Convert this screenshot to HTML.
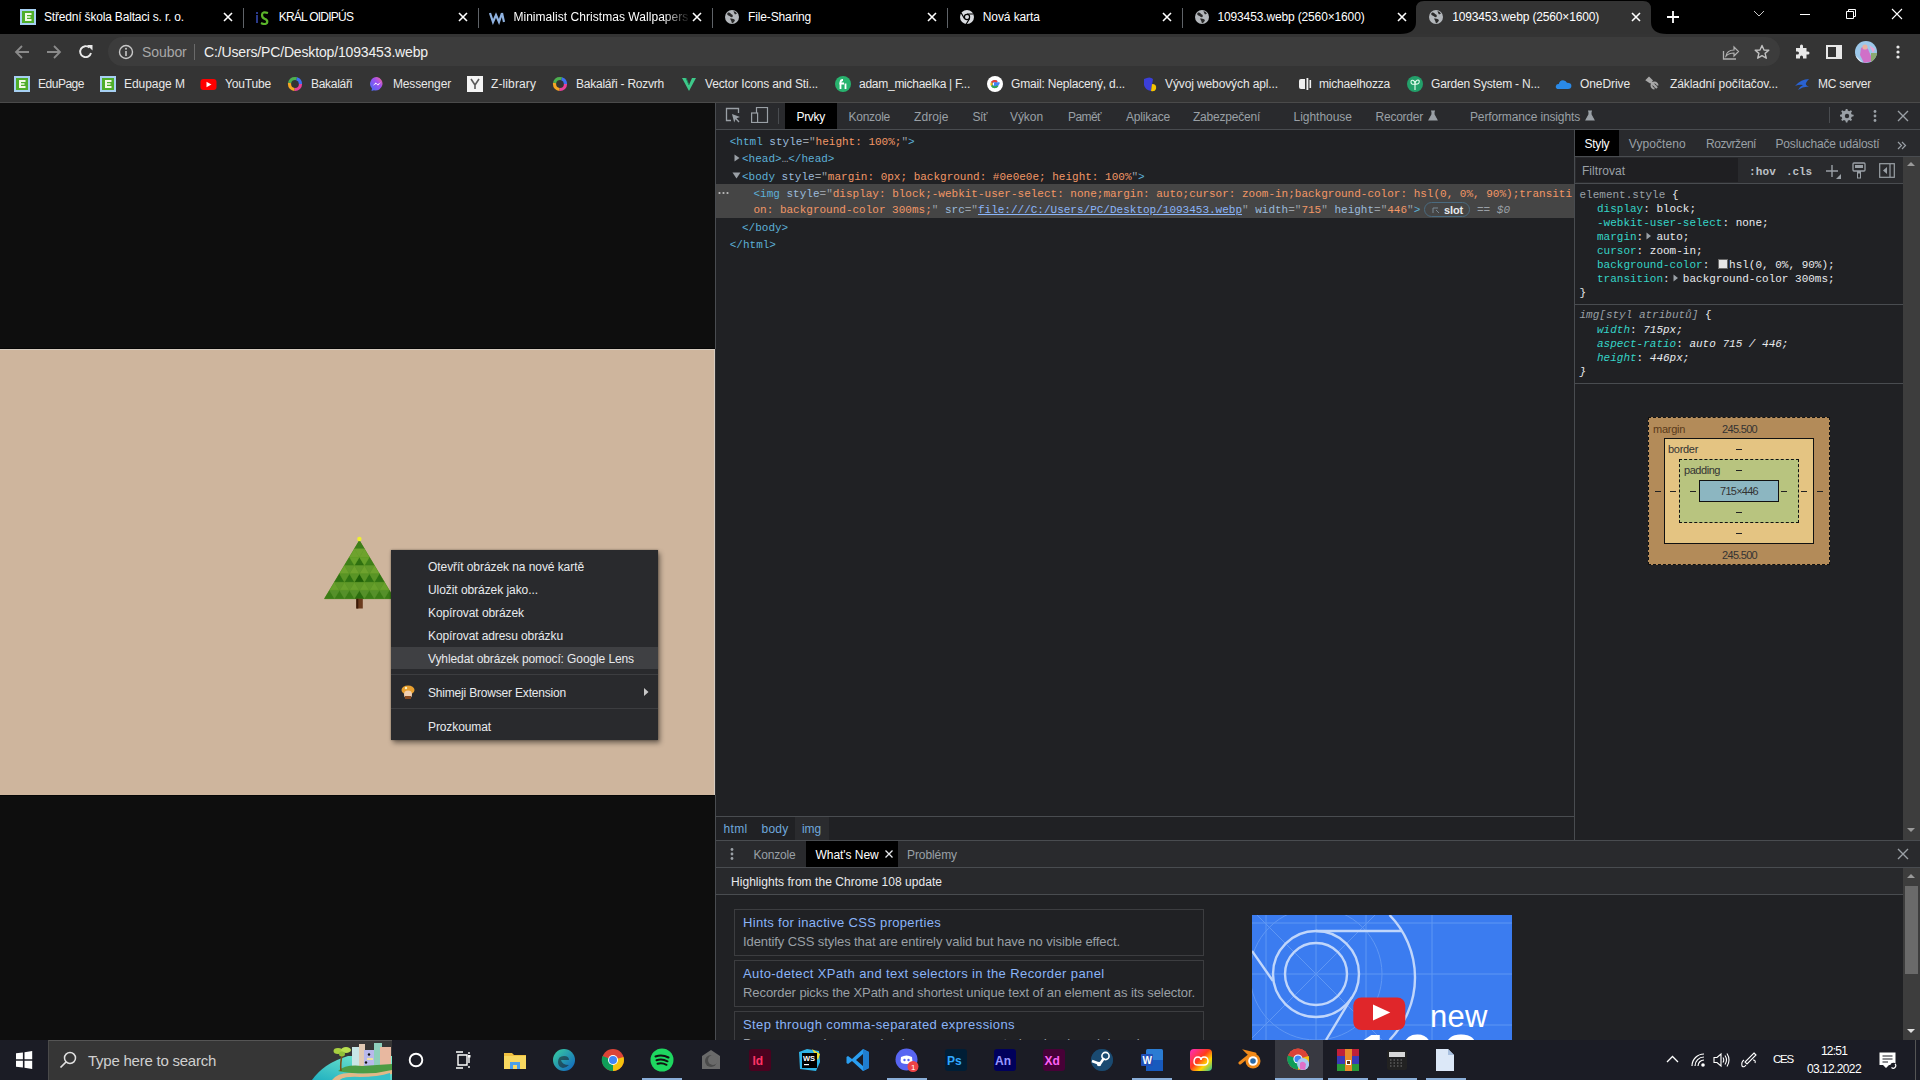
<!DOCTYPE html>
<html><head><meta charset="utf-8"><title>screen</title>
<style>
*{box-sizing:border-box;margin:0;padding:0}
html,body{width:1920px;height:1080px;overflow:hidden;background:#0e0e0e;font-family:"Liberation Sans",sans-serif;font-size:12px;color:#e8eaed}
.a{position:absolute}
svg.a{display:block}
.t{position:absolute;white-space:nowrap}
.m{font-family:"Liberation Mono",monospace;white-space:pre}
</style></head><body>
<div class="a" style="left:0px;top:0px;width:1920px;height:34px;background:#000;"></div>
<svg class="a" style="left:1400px;top:0px;" width="268" height="34" viewBox="0 0 268 34"><path d="M0 34 Q16 34 16 22 L16 9 Q16 1 24 1 L243 1 Q251 1 251 9 L251 22 Q251 34 267 34 Z" fill="#333333"/></svg>
<svg class="a" style="left:20px;top:9px;" width="16" height="16" viewBox="0 0 16 16"><rect width="16" height="16" fill="#a6cff2"/><rect x="2" y="2" width="12" height="12" fill="#4fae2a"/><path d="M5 4 H11.5 V6 H7 V7.2 H10.5 V8.8 H7 V10 H11.5 V12 H5 Z" fill="#f2fae6"/></svg>
<div class="t " style="left:44.0px;top:11px;font-family:'Liberation Sans',sans-serif;font-size:12px;line-height:12px;color:#fff;letter-spacing:-0.180px;">Střední škola Baltaci s. r. o.</div>
<svg class="a" style="left:223px;top:12px;" width="10" height="10" viewBox="0 0 10 10"><path d="M1 1 L9 9 M9 1 L1 9" stroke="#fff" stroke-width="1.6"/></svg>
<div class="a" style="left:243px;top:8px;width:1px;height:20px;background:#5f6368;"></div>
<svg class="a" style="left:255px;top:9px;" width="16" height="16" viewBox="0 0 16 16"><rect x="1" y="3" width="2" height="2" fill="#2a3a8a"/><rect x="1" y="6" width="2" height="8" fill="#2a3a8a"/><path d="M13 4 Q7 2 7 6 Q7 9 10 10 Q13 11 12 14 Q10 16 6 14" stroke="#5bb52a" stroke-width="2.2" fill="none"/></svg>
<div class="t " style="left:278.7px;top:11px;font-family:'Liberation Sans',sans-serif;font-size:12px;line-height:12px;color:#fff;letter-spacing:-0.752px;">KRÁL OIDIPÚS</div>
<svg class="a" style="left:458px;top:12px;" width="10" height="10" viewBox="0 0 10 10"><path d="M1 1 L9 9 M9 1 L1 9" stroke="#fff" stroke-width="1.6"/></svg>
<div class="a" style="left:478px;top:8px;width:1px;height:20px;background:#5f6368;"></div>
<svg class="a" style="left:489px;top:9px;" width="16" height="16" viewBox="0 0 16 16"><path d="M1 4 L4 13 L7 6 L10 13 L13 4 M13 4 L15 13" stroke="#8fb2e0" stroke-width="2.2" fill="none"/></svg>
<div class="a" style="left:513.4px;top:9px;width:180px;height:18px;overflow:hidden;-webkit-mask-image:linear-gradient(90deg,#000 150px,transparent 178px)"><div class="t " style="left:0px;top:2px;font-family:'Liberation Sans',sans-serif;font-size:12px;line-height:12px;color:#fff;letter-spacing:0.045px;">Minimalist Christmas Wallpapers</div></div>
<svg class="a" style="left:692px;top:12px;" width="10" height="10" viewBox="0 0 10 10"><path d="M1 1 L9 9 M9 1 L1 9" stroke="#fff" stroke-width="1.6"/></svg>
<div class="a" style="left:712px;top:8px;width:1px;height:20px;background:#5f6368;"></div>
<svg class="a" style="left:724px;top:9px;" width="16" height="16" viewBox="0 0 16 16"><circle cx="8" cy="8" r="7" fill="#b4b8bc"/><path d="M4 3.5 Q6.5 3 7 5 Q9.5 5.5 8.5 8 Q6.5 8.5 5.5 7 Q3.5 6.5 3 5 Z M9.5 2 Q12 2.5 13 4.5 L11 5.5 Q10 4 9.5 2 Z M6 9.5 Q9.5 9 11 11 Q10.5 13.5 8 14.5 Q7.5 12 6 9.5 Z" fill="#2a2a2a"/></svg>
<div class="t " style="left:748.1px;top:11px;font-family:'Liberation Sans',sans-serif;font-size:12px;line-height:12px;color:#fff;letter-spacing:-0.141px;">File-Sharing</div>
<svg class="a" style="left:927px;top:12px;" width="10" height="10" viewBox="0 0 10 10"><path d="M1 1 L9 9 M9 1 L1 9" stroke="#fff" stroke-width="1.6"/></svg>
<div class="a" style="left:947px;top:8px;width:1px;height:20px;background:#5f6368;"></div>
<svg class="a" style="left:959px;top:9px;" width="16" height="16" viewBox="0 0 16 16"><circle cx="8" cy="8" r="7" fill="#dadce0"/><circle cx="8" cy="8" r="3.2" fill="#000"/><circle cx="8" cy="8" r="2" fill="#dadce0"/><path d="M8 5 L14.5 5 M5.4 9.5 L2.2 4 M10.6 9.5 L7.3 15" stroke="#000" stroke-width="1.2"/></svg>
<div class="t " style="left:982.8px;top:11px;font-family:'Liberation Sans',sans-serif;font-size:12px;line-height:12px;color:#fff;letter-spacing:-0.103px;">Nová karta</div>
<svg class="a" style="left:1162px;top:12px;" width="10" height="10" viewBox="0 0 10 10"><path d="M1 1 L9 9 M9 1 L1 9" stroke="#fff" stroke-width="1.6"/></svg>
<div class="a" style="left:1182px;top:8px;width:1px;height:20px;background:#5f6368;"></div>
<svg class="a" style="left:1194px;top:9px;" width="16" height="16" viewBox="0 0 16 16"><circle cx="8" cy="8" r="7" fill="#b4b8bc"/><path d="M4 3.5 Q6.5 3 7 5 Q9.5 5.5 8.5 8 Q6.5 8.5 5.5 7 Q3.5 6.5 3 5 Z M9.5 2 Q12 2.5 13 4.5 L11 5.5 Q10 4 9.5 2 Z M6 9.5 Q9.5 9 11 11 Q10.5 13.5 8 14.5 Q7.5 12 6 9.5 Z" fill="#2a2a2a"/></svg>
<div class="t " style="left:1217.5px;top:11px;font-family:'Liberation Sans',sans-serif;font-size:12px;line-height:12px;color:#fff;letter-spacing:-0.144px;">1093453.webp (2560×1600)</div>
<svg class="a" style="left:1397px;top:12px;" width="10" height="10" viewBox="0 0 10 10"><path d="M1 1 L9 9 M9 1 L1 9" stroke="#fff" stroke-width="1.6"/></svg>
<svg class="a" style="left:1428px;top:9px;" width="16" height="16" viewBox="0 0 16 16"><circle cx="8" cy="8" r="7" fill="#b4b8bc"/><path d="M4 3.5 Q6.5 3 7 5 Q9.5 5.5 8.5 8 Q6.5 8.5 5.5 7 Q3.5 6.5 3 5 Z M9.5 2 Q12 2.5 13 4.5 L11 5.5 Q10 4 9.5 2 Z M6 9.5 Q9.5 9 11 11 Q10.5 13.5 8 14.5 Q7.5 12 6 9.5 Z" fill="#2a2a2a"/></svg>
<div class="t " style="left:1452.2px;top:11px;font-family:'Liberation Sans',sans-serif;font-size:12px;line-height:12px;color:#fff;letter-spacing:-0.144px;">1093453.webp (2560×1600)</div>
<svg class="a" style="left:1631px;top:12px;" width="10" height="10" viewBox="0 0 10 10"><path d="M1 1 L9 9 M9 1 L1 9" stroke="#fff" stroke-width="1.6"/></svg>
<svg class="a" style="left:1666px;top:10px;" width="14" height="14" viewBox="0 0 14 14"><path d="M7 1 V13 M1 7 H13" stroke="#fff" stroke-width="1.8"/></svg>
<svg class="a" style="left:1753px;top:10px;" width="12" height="8" viewBox="0 0 12 8"><path d="M1 1 L6 6 L11 1" stroke="#c8c8c8" stroke-width="1" fill="none"/></svg>
<div class="a" style="left:1800px;top:14px;width:10px;height:1px;background:#fff;"></div>
<svg class="a" style="left:1845px;top:8px;" width="12" height="12" viewBox="0 0 12 12"><path d="M1.5 3.5 H8.5 V10.5 H1.5 Z M3.5 3.5 V1.5 H10.5 V8.5 H8.5" stroke="#fff" stroke-width="1" fill="none"/></svg>
<svg class="a" style="left:1891px;top:8px;" width="12" height="12" viewBox="0 0 12 12"><path d="M1 1 L11 11 M11 1 L1 11" stroke="#fff" stroke-width="1.1"/></svg>
<div class="a" style="left:0px;top:34px;width:1920px;height:68px;background:#343434;"></div>
<div class="a" style="left:108px;top:37px;width:1672px;height:29px;background:#3c3c3c;border-radius:15px"></div>
<svg class="a" style="left:14px;top:45px;" width="16" height="14" viewBox="0 0 16 14"><path d="M15 7 H2 M8 1 L2 7 L8 13" stroke="#8a8a8a" stroke-width="1.8" fill="none"/></svg>
<svg class="a" style="left:46px;top:45px;" width="16" height="14" viewBox="0 0 16 14"><path d="M1 7 H14 M8 1 L14 7 L8 13" stroke="#8a8a8a" stroke-width="1.8" fill="none"/></svg>
<svg class="a" style="left:78px;top:44px;" width="16" height="16" viewBox="0 0 16 16"><path d="M13 9 A5.5 5.5 0 1 1 11.4 3.6" stroke="#e8e8e8" stroke-width="1.9" fill="none"/><path d="M9 1 L14.5 1 L14.5 6.5 Z" fill="#e8e8e8"/></svg>
<svg class="a" style="left:118px;top:44px;" width="16" height="16" viewBox="0 0 16 16"><circle cx="8" cy="8" r="6.5" stroke="#c8c8c8" stroke-width="1.4" fill="none"/><rect x="7.2" y="7" width="1.6" height="5" fill="#c8c8c8"/><circle cx="8" cy="4.7" r="1" fill="#c8c8c8"/></svg>
<div class="t " style="left:142px;top:45px;font-family:'Liberation Sans',sans-serif;font-size:14px;line-height:14px;color:#a8a8a8;letter-spacing:-0.074px;">Soubor</div>
<div class="a" style="left:194px;top:44px;width:1px;height:16px;background:#6a6a6a;"></div>
<div class="t " style="left:204px;top:45px;font-family:'Liberation Sans',sans-serif;font-size:14px;line-height:14px;color:#f0f0f0;letter-spacing:-0.150px;">C:/Users/PC/Desktop/1093453.webp</div>
<svg class="a" style="left:1722px;top:44px;" width="18" height="16" viewBox="0 0 18 16"><path d="M1.5 7 V15 H14" stroke="#b0b0b0" stroke-width="1.3" fill="none"/><path d="M4 12 Q5 6 12 6 V3 L16.5 7.5 L12 12 V9 Q7 9 4 12 Z" stroke="#b0b0b0" stroke-width="1.2" fill="none"/></svg>
<svg class="a" style="left:1754px;top:44px;" width="16" height="16" viewBox="0 0 16 16"><path d="M8 1.5 L10 6 L14.8 6.3 L11.1 9.4 L12.3 14.2 L8 11.6 L3.7 14.2 L4.9 9.4 L1.2 6.3 L6 6 Z" stroke="#c0c0c0" stroke-width="1.4" fill="none" stroke-linejoin="round"/></svg>
<svg class="a" style="left:1794px;top:44px;" width="16" height="16" viewBox="0 0 16 16"><path d="M6 2 Q6 0.5 7.5 0.5 Q9 0.5 9 2 V4 H12.5 V7.5 H14 Q15.5 7.5 15.5 9 Q15.5 10.5 14 10.5 H12.5 V14.5 H9 V13 Q9 11.5 7.5 11.5 Q6 11.5 6 13 V14.5 H2 V10.5 H3.5 Q5 10.5 5 9 Q5 7.5 3.5 7.5 H2 V4 H6 Z" fill="#e8e8e8"/></svg>
<svg class="a" style="left:1826px;top:45px;" width="16" height="14" viewBox="0 0 16 14"><rect x="1" y="1" width="14" height="12" stroke="#e8e8e8" stroke-width="2" fill="none"/><rect x="10" y="1" width="5" height="12" fill="#e8e8e8"/></svg>
<svg class="a" style="left:1855px;top:41px;" width="22" height="22" viewBox="0 0 22 22"><defs><clipPath id="av"><circle cx="11" cy="11" r="11"/></clipPath></defs><g clip-path="url(#av)"><rect width="22" height="22" fill="#9cc8ea"/><path d="M0 14 L8 22 H0 Z" fill="#e8eef4"/><path d="M6 7 Q10 4 13 8 L18 20 L9 22 L5 14 Z" fill="#d070c8"/><circle cx="10" cy="6" r="2.6" fill="#e8b0a0"/><path d="M14 4 L20 8 L18 12 Z" fill="#e6a8d8"/><rect x="16" y="12" width="6" height="10" fill="#8aaa70"/></g></svg>
<svg class="a" style="left:1895px;top:45px;" width="6" height="14" viewBox="0 0 6 14"><circle cx="3" cy="2" r="1.6" fill="#e8e8e8"/><circle cx="3" cy="7" r="1.6" fill="#e8e8e8"/><circle cx="3" cy="12" r="1.6" fill="#e8e8e8"/></svg>
<svg class="a" style="left:14px;top:76px;" width="16" height="16" viewBox="0 0 16 16"><rect width="16" height="16" fill="#a6cff2"/><rect x="2" y="2" width="12" height="12" fill="#4fae2a"/><path d="M5 4 H11.5 V6 H7 V7.2 H10.5 V8.8 H7 V10 H11.5 V12 H5 Z" fill="#f2fae6"/></svg>
<div class="t " style="left:38px;top:78px;font-family:'Liberation Sans',sans-serif;font-size:12px;line-height:12px;color:#e8e8e8;letter-spacing:-0.482px;">EduPage</div>
<svg class="a" style="left:100px;top:76px;" width="16" height="16" viewBox="0 0 16 16"><rect width="16" height="16" fill="#a6cff2"/><rect x="2" y="2" width="12" height="12" fill="#4fae2a"/><path d="M5 4 H11.5 V6 H7 V7.2 H10.5 V8.8 H7 V10 H11.5 V12 H5 Z" fill="#f2fae6"/></svg>
<div class="t " style="left:124px;top:78px;font-family:'Liberation Sans',sans-serif;font-size:12px;line-height:12px;color:#e8e8e8;letter-spacing:-0.042px;">Edupage M</div>
<svg class="a" style="left:200px;top:76px;" width="17" height="16" viewBox="0 0 17 16"><rect x="0.5" y="3" width="16" height="11" rx="3" fill="#f00"/><path d="M6.5 5.8 L11.5 8.5 L6.5 11.2 Z" fill="#fff"/></svg>
<div class="t " style="left:225px;top:78px;font-family:'Liberation Sans',sans-serif;font-size:12px;line-height:12px;color:#e8e8e8;letter-spacing:-0.165px;">YouTube</div>
<svg class="a" style="left:287px;top:76px;" width="16" height="16" viewBox="0 0 16 16"><circle cx="8" cy="8" r="5.5" stroke="#e9409a" stroke-width="3.2" fill="none" stroke-dasharray="9 30"/><circle cx="8" cy="8" r="5.5" stroke="#f5a623" stroke-width="3.2" fill="none" stroke-dasharray="0 9 9 30"/><circle cx="8" cy="8" r="5.5" stroke="#4caf50" stroke-width="3.2" fill="none" stroke-dasharray="0 18 9 30"/><circle cx="8" cy="8" r="5.5" stroke="#3f6ff0" stroke-width="3.2" fill="none" stroke-dasharray="0 27 8 30"/></svg>
<div class="t " style="left:311px;top:78px;font-family:'Liberation Sans',sans-serif;font-size:12px;line-height:12px;color:#e8e8e8;letter-spacing:-0.294px;">Bakaláři</div>
<svg class="a" style="left:369px;top:76px;" width="16" height="16" viewBox="0 0 16 16"><defs><linearGradient id="mg" x1="0" y1="1" x2="1" y2="0"><stop offset="0" stop-color="#3d6df5"/><stop offset="0.6" stop-color="#a050f0"/><stop offset="1" stop-color="#ff6a8a"/></linearGradient></defs><path d="M8 1 A7 6.8 0 1 1 5 14.3 L2.5 15 L3 12.5 A7 6.8 0 0 1 8 1 Z" fill="url(#mg)"/><path d="M3.8 9.8 L6.8 6.6 L8.6 8.2 L12 6.2 L9 9.4 L7.2 7.8 Z" fill="#fff"/></svg>
<div class="t " style="left:393px;top:78px;font-family:'Liberation Sans',sans-serif;font-size:12px;line-height:12px;color:#e8e8e8;letter-spacing:-0.151px;">Messenger</div>
<svg class="a" style="left:467px;top:76px;" width="16" height="16" viewBox="0 0 16 16"><rect x="0" y="0" width="16" height="16" fill="#f4f4f4"/><path d="M4 3 L8 9 L12 3 M8 9 V13" stroke="#5a5a5a" stroke-width="1.6" fill="none"/></svg>
<div class="t " style="left:491px;top:78px;font-family:'Liberation Sans',sans-serif;font-size:12px;line-height:12px;color:#e8e8e8;letter-spacing:0.111px;">Z-library</div>
<svg class="a" style="left:552px;top:76px;" width="16" height="16" viewBox="0 0 16 16"><circle cx="8" cy="8" r="5.5" stroke="#e9409a" stroke-width="3.2" fill="none" stroke-dasharray="9 30"/><circle cx="8" cy="8" r="5.5" stroke="#f5a623" stroke-width="3.2" fill="none" stroke-dasharray="0 9 9 30"/><circle cx="8" cy="8" r="5.5" stroke="#4caf50" stroke-width="3.2" fill="none" stroke-dasharray="0 18 9 30"/><circle cx="8" cy="8" r="5.5" stroke="#3f6ff0" stroke-width="3.2" fill="none" stroke-dasharray="0 27 8 30"/></svg>
<div class="t " style="left:576px;top:78px;font-family:'Liberation Sans',sans-serif;font-size:12px;line-height:12px;color:#e8e8e8;letter-spacing:-0.237px;">Bakaláři - Rozvrh</div>
<svg class="a" style="left:681px;top:76px;" width="16" height="16" viewBox="0 0 16 16"><path d="M1 2 L8 15 L15 2 L11 2 L8 9 L5 2 Z" fill="#3ec98a"/><path d="M5 2 L8 9" stroke="#1b8a5a" stroke-width="1"/></svg>
<div class="t " style="left:705px;top:78px;font-family:'Liberation Sans',sans-serif;font-size:12px;line-height:12px;color:#e8e8e8;letter-spacing:-0.162px;">Vector Icons and Sti...</div>
<svg class="a" style="left:835px;top:76px;" width="16" height="16" viewBox="0 0 16 16"><circle cx="8" cy="8" r="8" fill="#28b36e"/><path d="M5.5 13 V6.5 Q5.5 4 8 4 M4.3 7.5 H9 M10.5 7.5 V13" stroke="#fff" stroke-width="1.8" fill="none"/></svg>
<div class="t " style="left:859px;top:78px;font-family:'Liberation Sans',sans-serif;font-size:12px;line-height:12px;color:#e8e8e8;letter-spacing:-0.262px;">adam_michaelka | F...</div>
<svg class="a" style="left:987px;top:76px;" width="16" height="16" viewBox="0 0 16 16"><circle cx="8" cy="8" r="8" fill="#fff"/><path d="M12.6 7.2 H8 V9 H10.7 A3 3 0 1 1 10 5.9" stroke="#4285f4" stroke-width="2" fill="none"/><path d="M10 5.9 A3.4 3.4 0 0 0 4.7 6.6" stroke="#ea4335" stroke-width="2" fill="none"/><path d="M4.7 6.6 A3.4 3.4 0 0 0 4.8 9.6" stroke="#fbbc05" stroke-width="2" fill="none"/><path d="M4.8 9.6 A3.4 3.4 0 0 0 10.6 9.8" stroke="#34a853" stroke-width="2" fill="none"/></svg>
<div class="t " style="left:1011px;top:78px;font-family:'Liberation Sans',sans-serif;font-size:12px;line-height:12px;color:#e8e8e8;letter-spacing:-0.184px;">Gmail: Neplacený, d...</div>
<svg class="a" style="left:1142px;top:76px;" width="16" height="16" viewBox="0 0 16 16"><path d="M2 3 Q8 0 11 3 L9 15 Q3 14 2 9 Z" fill="#3b3fd8"/><path d="M10 8 Q15 8 14 13 Q13 16 9 15 Z" fill="#f5c400"/></svg>
<div class="t " style="left:1165px;top:78px;font-family:'Liberation Sans',sans-serif;font-size:12px;line-height:12px;color:#e8e8e8;letter-spacing:-0.114px;">Vývoj webových apl...</div>
<svg class="a" style="left:1297px;top:76px;" width="16" height="16" viewBox="0 0 16 16"><path d="M4 3 H8 V13 H4 Q2 13 2 11 V5 Q2 3 4 3 Z" fill="#f0f0f0"/><rect x="9.5" y="2" width="1.8" height="12" fill="#f0f0f0"/><rect x="12.5" y="4" width="1.6" height="8" fill="#f0f0f0"/></svg>
<div class="t " style="left:1319px;top:78px;font-family:'Liberation Sans',sans-serif;font-size:12px;line-height:12px;color:#e8e8e8;letter-spacing:-0.198px;">michaelhozza</div>
<svg class="a" style="left:1407px;top:76px;" width="16" height="16" viewBox="0 0 16 16"><circle cx="8" cy="8" r="8" fill="#23a06a"/><path d="M8 14 V8 M8 8 Q4 9 4 6 Q4 3.5 6.5 4.5 Q8 5.5 8 8 Q8 5 10 4.2 Q12.5 3.5 12.2 6 Q12 8.5 8 8" stroke="#e8fff0" stroke-width="1.1" fill="none"/></svg>
<div class="t " style="left:1431px;top:78px;font-family:'Liberation Sans',sans-serif;font-size:12px;line-height:12px;color:#e8e8e8;letter-spacing:-0.185px;">Garden System - N...</div>
<svg class="a" style="left:1555px;top:76px;" width="17" height="16" viewBox="0 0 17 16"><path d="M3.5 13 Q0.5 13 0.8 10.2 Q1.2 7.8 3.8 8 Q4.5 4.5 8 4.3 Q10.8 4.3 12 6.8 Q16.5 6.8 16.4 10 Q16.3 13 13 13 Z" fill="#2a8ae8"/></svg>
<div class="t " style="left:1580px;top:78px;font-family:'Liberation Sans',sans-serif;font-size:12px;line-height:12px;color:#e8e8e8;letter-spacing:-0.085px;">OneDrive</div>
<svg class="a" style="left:1645px;top:76px;" width="16" height="16" viewBox="0 0 16 16"><path d="M2 4 L4 2 L6.5 4.5 L5 6 Z M5.5 5.5 L12 12" stroke="#a8a8a8" stroke-width="2.2" fill="#a8a8a8"/><path d="M12.5 9.5 A3 3 0 1 0 9.5 12.5" stroke="#a8a8a8" stroke-width="2" fill="none"/></svg>
<div class="t " style="left:1670px;top:78px;font-family:'Liberation Sans',sans-serif;font-size:12px;line-height:12px;color:#e8e8e8;letter-spacing:-0.087px;">Základní počítačov...</div>
<svg class="a" style="left:1794px;top:76px;" width="16" height="16" viewBox="0 0 16 16"><path d="M15 3 Q7 3 1 10 Q6 8 9 9 Q5 11 4 14 Q10 10 15 11 Q11 9 12 7 Q13 5 15 3 Z" fill="#2a62d0"/></svg>
<div class="t " style="left:1818px;top:78px;font-family:'Liberation Sans',sans-serif;font-size:12px;line-height:12px;color:#e8e8e8;letter-spacing:-0.260px;">MC server</div>
<div class="a" style="left:0px;top:102px;width:1920px;height:1px;background:#4a4a4a;"></div>
<div class="a" style="left:0px;top:103px;width:715px;height:937px;background:#0e0e0e;"></div>
<div class="a" style="left:0px;top:349px;width:715px;height:446px;background:#ceb59d;"></div>
<div class="a" style="left:0px;top:349px;width:715px;height:1px;background:#d6ccc0;"></div>
<div class="a" style="left:714px;top:349px;width:1px;height:446px;background:#d6ccc0;"></div>
<div class="a" style="left:0px;top:348px;width:715px;height:1px;background:#050505;"></div>
<div class="a" style="left:0px;top:795px;width:715px;height:1px;background:#050505;"></div>
<svg class="a" style="left:0;top:0" width="715" height="1040" viewBox="0 0 715 1040"><path d="M359.40 540.00 L394.70 598.80 L324.10 598.80 Z" fill="#4f8a1e"/><path d="M359.40 540.50 L364.39 548.83 L354.41 548.83 Z" fill="#3d7d1a" stroke="#3d7d1a" stroke-width="0.3"/><path d="M354.41 548.83 L359.40 557.16 L349.43 557.16 Z" fill="#6ea22e" stroke="#6ea22e" stroke-width="0.3"/><path d="M364.39 548.83 L369.37 557.16 L359.40 557.16 Z" fill="#6ea22e" stroke="#6ea22e" stroke-width="0.3"/><path d="M354.41 548.83 L364.39 548.83 L359.40 557.16 Z" fill="#6ea22e" stroke="#6ea22e" stroke-width="0.3"/><path d="M349.43 557.16 L354.41 565.49 L344.44 565.49 Z" fill="#3f8019" stroke="#3f8019" stroke-width="0.3"/><path d="M359.40 557.16 L364.39 565.49 L354.41 565.49 Z" fill="#2f7010" stroke="#2f7010" stroke-width="0.3"/><path d="M369.37 557.16 L374.36 565.49 L364.39 565.49 Z" fill="#3f8019" stroke="#3f8019" stroke-width="0.3"/><path d="M349.43 557.16 L359.40 557.16 L354.41 565.49 Z" fill="#66a02a" stroke="#66a02a" stroke-width="0.3"/><path d="M359.40 557.16 L369.37 557.16 L364.39 565.49 Z" fill="#66a02a" stroke="#66a02a" stroke-width="0.3"/><path d="M344.44 565.49 L349.43 573.81 L339.46 573.81 Z" fill="#6ea22e" stroke="#6ea22e" stroke-width="0.3"/><path d="M354.41 565.49 L359.40 573.81 L349.43 573.81 Z" fill="#6ea22e" stroke="#6ea22e" stroke-width="0.3"/><path d="M364.39 565.49 L369.37 573.81 L359.40 573.81 Z" fill="#6ea22e" stroke="#6ea22e" stroke-width="0.3"/><path d="M374.36 565.49 L379.34 573.81 L369.37 573.81 Z" fill="#6ea22e" stroke="#6ea22e" stroke-width="0.3"/><path d="M344.44 565.49 L354.41 565.49 L349.43 573.81 Z" fill="#62982a" stroke="#62982a" stroke-width="0.3"/><path d="M354.41 565.49 L364.39 565.49 L359.40 573.81 Z" fill="#62982a" stroke="#62982a" stroke-width="0.3"/><path d="M364.39 565.49 L374.36 565.49 L369.37 573.81 Z" fill="#62982a" stroke="#62982a" stroke-width="0.3"/><path d="M339.46 573.81 L344.44 582.14 L334.47 582.14 Z" fill="#2f7212" stroke="#2f7212" stroke-width="0.3"/><path d="M349.43 573.81 L354.41 582.14 L344.44 582.14 Z" fill="#2f7212" stroke="#2f7212" stroke-width="0.3"/><path d="M359.40 573.81 L364.39 582.14 L354.41 582.14 Z" fill="#1f6008" stroke="#1f6008" stroke-width="0.3"/><path d="M369.37 573.81 L374.36 582.14 L364.39 582.14 Z" fill="#2f7212" stroke="#2f7212" stroke-width="0.3"/><path d="M379.34 573.81 L384.33 582.14 L374.36 582.14 Z" fill="#2f7212" stroke="#2f7212" stroke-width="0.3"/><path d="M339.46 573.81 L349.43 573.81 L344.44 582.14 Z" fill="#5a9426" stroke="#5a9426" stroke-width="0.3"/><path d="M349.43 573.81 L359.40 573.81 L354.41 582.14 Z" fill="#5a9426" stroke="#5a9426" stroke-width="0.3"/><path d="M359.40 573.81 L369.37 573.81 L364.39 582.14 Z" fill="#5a9426" stroke="#5a9426" stroke-width="0.3"/><path d="M369.37 573.81 L379.34 573.81 L374.36 582.14 Z" fill="#5a9426" stroke="#5a9426" stroke-width="0.3"/><path d="M334.47 582.14 L339.46 590.47 L329.49 590.47 Z" fill="#68a02c" stroke="#68a02c" stroke-width="0.3"/><path d="M344.44 582.14 L349.43 590.47 L339.46 590.47 Z" fill="#68a02c" stroke="#68a02c" stroke-width="0.3"/><path d="M354.41 582.14 L359.40 590.47 L349.43 590.47 Z" fill="#68a02c" stroke="#68a02c" stroke-width="0.3"/><path d="M364.39 582.14 L369.37 590.47 L359.40 590.47 Z" fill="#68a02c" stroke="#68a02c" stroke-width="0.3"/><path d="M374.36 582.14 L379.34 590.47 L369.37 590.47 Z" fill="#68a02c" stroke="#68a02c" stroke-width="0.3"/><path d="M384.33 582.14 L389.31 590.47 L379.34 590.47 Z" fill="#68a02c" stroke="#68a02c" stroke-width="0.3"/><path d="M334.47 582.14 L344.44 582.14 L339.46 590.47 Z" fill="#5f9828" stroke="#5f9828" stroke-width="0.3"/><path d="M344.44 582.14 L354.41 582.14 L349.43 590.47 Z" fill="#5f9828" stroke="#5f9828" stroke-width="0.3"/><path d="M354.41 582.14 L364.39 582.14 L359.40 590.47 Z" fill="#5f9828" stroke="#5f9828" stroke-width="0.3"/><path d="M364.39 582.14 L374.36 582.14 L369.37 590.47 Z" fill="#5f9828" stroke="#5f9828" stroke-width="0.3"/><path d="M374.36 582.14 L384.33 582.14 L379.34 590.47 Z" fill="#5f9828" stroke="#5f9828" stroke-width="0.3"/><path d="M329.49 590.47 L334.47 598.80 L324.50 598.80 Z" fill="#3a7c16" stroke="#3a7c16" stroke-width="0.3"/><path d="M339.46 590.47 L344.44 598.80 L334.47 598.80 Z" fill="#3a7c16" stroke="#3a7c16" stroke-width="0.3"/><path d="M349.43 590.47 L354.41 598.80 L344.44 598.80 Z" fill="#3a7c16" stroke="#3a7c16" stroke-width="0.3"/><path d="M359.40 590.47 L364.39 598.80 L354.41 598.80 Z" fill="#2a6c0e" stroke="#2a6c0e" stroke-width="0.3"/><path d="M369.37 590.47 L374.36 598.80 L364.39 598.80 Z" fill="#3a7c16" stroke="#3a7c16" stroke-width="0.3"/><path d="M379.34 590.47 L384.33 598.80 L374.36 598.80 Z" fill="#3a7c16" stroke="#3a7c16" stroke-width="0.3"/><path d="M389.31 590.47 L394.30 598.80 L384.33 598.80 Z" fill="#3a7c16" stroke="#3a7c16" stroke-width="0.3"/><path d="M329.49 590.47 L339.46 590.47 L334.47 598.80 Z" fill="#55902a" stroke="#55902a" stroke-width="0.3"/><path d="M339.46 590.47 L349.43 590.47 L344.44 598.80 Z" fill="#55902a" stroke="#55902a" stroke-width="0.3"/><path d="M349.43 590.47 L359.40 590.47 L354.41 598.80 Z" fill="#55902a" stroke="#55902a" stroke-width="0.3"/><path d="M359.40 590.47 L369.37 590.47 L364.39 598.80 Z" fill="#55902a" stroke="#55902a" stroke-width="0.3"/><path d="M369.37 590.47 L379.34 590.47 L374.36 598.80 Z" fill="#55902a" stroke="#55902a" stroke-width="0.3"/><path d="M379.34 590.47 L389.31 590.47 L384.33 598.80 Z" fill="#55902a" stroke="#55902a" stroke-width="0.3"/><rect x="356.3" y="598.8" width="6.5" height="9.7" fill="#6b3b1e"/><rect x="356.3" y="598.8" width="2" height="9.7" fill="#3a1a08"/><circle cx="359.4" cy="539" r="2.2" fill="#eef030"/></svg>
<div class="a" style="left:391px;top:550px;width:267px;height:190px;background:#292a2d;box-shadow:2px 3px 5px rgba(0,0,0,0.45),0 0 2px rgba(0,0,0,.35)"></div>
<div class="a" style="left:391px;top:647px;width:267px;height:22px;background:#3f4043;"></div>
<div class="a" style="left:391px;top:674px;width:267px;height:1px;background:#3c3d40;"></div>
<div class="a" style="left:391px;top:708px;width:267px;height:1px;background:#3c3d40;"></div>
<div class="t " style="left:428px;top:561px;font-family:'Liberation Sans',sans-serif;font-size:12px;line-height:12px;color:#e8eaed;letter-spacing:-0.072px;">Otevřít obrázek na nové kartě</div>
<div class="t " style="left:428px;top:584px;font-family:'Liberation Sans',sans-serif;font-size:12px;line-height:12px;color:#e8eaed;letter-spacing:-0.063px;">Uložit obrázek jako...</div>
<div class="t " style="left:428px;top:607px;font-family:'Liberation Sans',sans-serif;font-size:12px;line-height:12px;color:#e8eaed;letter-spacing:-0.082px;">Kopírovat obrázek</div>
<div class="t " style="left:428px;top:630px;font-family:'Liberation Sans',sans-serif;font-size:12px;line-height:12px;color:#e8eaed;letter-spacing:-0.101px;">Kopírovat adresu obrázku</div>
<div class="t " style="left:428px;top:653px;font-family:'Liberation Sans',sans-serif;font-size:12px;line-height:12px;color:#e8eaed;letter-spacing:-0.102px;">Vyhledat obrázek pomocí: Google Lens</div>
<div class="t " style="left:428px;top:687px;font-family:'Liberation Sans',sans-serif;font-size:12px;line-height:12px;color:#e8eaed;letter-spacing:-0.189px;">Shimeji Browser Extension</div>
<div class="t " style="left:428px;top:721px;font-family:'Liberation Sans',sans-serif;font-size:12px;line-height:12px;color:#e8eaed;letter-spacing:-0.103px;">Prozkoumat</div>
<svg class="a" style="left:400px;top:684px;" width="16" height="16" viewBox="0 0 16 16"><ellipse cx="8" cy="6" rx="6.5" ry="4.5" fill="#e8a030"/><circle cx="6" cy="4" r="1.2" fill="#fff3c0"/><ellipse cx="8" cy="10.5" rx="4" ry="4" fill="#f2d0b0"/><rect x="5" y="12" width="6" height="3" fill="#8a4a20"/></svg>
<svg class="a" style="left:643px;top:687px;" width="6" height="10" viewBox="0 0 6 10"><path d="M1 1 L5.5 5 L1 9 Z" fill="#c8c8c8"/></svg>
<div class="a" style="left:715px;top:103px;width:1px;height:937px;background:#494c50;"></div>
<div class="a" style="left:715px;top:349px;width:1px;height:446px;background:#2e2e30;"></div>
<div class="a" style="left:716px;top:103px;width:1204px;height:26px;background:#292a2d;"></div>
<div class="a" style="left:716px;top:129px;width:1204px;height:1px;background:#494c50;"></div>
<div class="a" style="left:716px;top:130px;width:858px;height:687px;background:#202124;"></div>
<svg class="a" style="left:725px;top:107px;" width="16" height="16" viewBox="0 0 16 16"><path d="M6 13.5 H1.5 V1.5 H13.5 V6" stroke="#9aa0a6" stroke-width="1.3" fill="none"/><path d="M7 7 L15 10 L11.5 11.2 L14.5 14.5 L13.5 15.5 L10.5 12.2 L9.2 15.5 Z" fill="#9aa0a6"/></svg>
<svg class="a" style="left:751px;top:107px;" width="18" height="16" viewBox="0 0 18 16"><rect x="5.5" y="0.5" width="11" height="15" stroke="#9aa0a6" stroke-width="1.2" fill="#292a2d"/><rect x="0.6" y="6" width="6" height="9.5" stroke="#9aa0a6" stroke-width="1.2" fill="#292a2d"/></svg>
<div class="a" style="left:778px;top:108px;width:1px;height:16px;background:#494c50;"></div>
<div class="a" style="left:785px;top:103px;width:52px;height:26px;background:#000;"></div>
<div class="t " style="left:796.5px;top:111px;font-family:'Liberation Sans',sans-serif;font-size:12px;line-height:12px;color:#fff;letter-spacing:-0.340px;">Prvky</div>
<div class="t " style="left:848.5px;top:111px;font-family:'Liberation Sans',sans-serif;font-size:12px;line-height:12px;color:#9aa0a6;letter-spacing:-0.266px;">Konzole</div>
<div class="t " style="left:914px;top:111px;font-family:'Liberation Sans',sans-serif;font-size:12px;line-height:12px;color:#9aa0a6;letter-spacing:0.081px;">Zdroje</div>
<div class="t " style="left:972.5px;top:111px;font-family:'Liberation Sans',sans-serif;font-size:12px;line-height:12px;color:#9aa0a6;letter-spacing:-0.446px;">Síť</div>
<div class="t " style="left:1010px;top:111px;font-family:'Liberation Sans',sans-serif;font-size:12px;line-height:12px;color:#9aa0a6;letter-spacing:-0.070px;">Výkon</div>
<div class="t " style="left:1068px;top:111px;font-family:'Liberation Sans',sans-serif;font-size:12px;line-height:12px;color:#9aa0a6;letter-spacing:-0.570px;">Paměť</div>
<div class="t " style="left:1126px;top:111px;font-family:'Liberation Sans',sans-serif;font-size:12px;line-height:12px;color:#9aa0a6;letter-spacing:-0.170px;">Aplikace</div>
<div class="t " style="left:1193px;top:111px;font-family:'Liberation Sans',sans-serif;font-size:12px;line-height:12px;color:#9aa0a6;letter-spacing:-0.216px;">Zabezpečení</div>
<div class="t " style="left:1293.5px;top:111px;font-family:'Liberation Sans',sans-serif;font-size:12px;line-height:12px;color:#9aa0a6;letter-spacing:-0.022px;">Lighthouse</div>
<div class="t " style="left:1375.5px;top:111px;font-family:'Liberation Sans',sans-serif;font-size:12px;line-height:12px;color:#9aa0a6;letter-spacing:-0.232px;">Recorder</div>
<div class="t " style="left:1470px;top:111px;font-family:'Liberation Sans',sans-serif;font-size:12px;line-height:12px;color:#9aa0a6;letter-spacing:-0.136px;">Performance insights</div>
<svg class="a" style="left:1428px;top:110px;" width="10" height="11" viewBox="0 0 10 11"><path d="M3 1 H7 M4 1 V4.5 L1 10 H9 L6 4.5 V1" stroke="#9aa0a6" stroke-width="1.1" fill="#9aa0a6"/></svg>
<svg class="a" style="left:1585px;top:110px;" width="10" height="11" viewBox="0 0 10 11"><path d="M3 1 H7 M4 1 V4.5 L1 10 H9 L6 4.5 V1" stroke="#9aa0a6" stroke-width="1.1" fill="#9aa0a6"/></svg>
<div class="a" style="left:1829px;top:107px;width:1px;height:16px;background:#494c50;"></div>
<svg class="a" style="left:1840px;top:109px;" width="14" height="14" viewBox="0 0 14 14"><path d="M7 0.8 L8.6 0.8 L9 2.8 L10.6 3.6 L12.3 2.5 L13.5 3.7 L12.4 5.4 L13.2 7 L15.2 7.4 V9 L13.2 9.4 L12.4 11 L13.5 12.7 L12.3 13.9 L10.6 12.8 L9 13.6 L8.6 15.6 H7 L6.6 13.6 L5 12.8 L3.3 13.9 L2.1 12.7 L3.2 11 L2.4 9.4 L0.4 9 V7.4 L2.4 7 L3.2 5.4 L2.1 3.7 L3.3 2.5 L5 3.6 L6.6 2.8 Z" transform="translate(-0.8,-1.2) scale(0.95)" fill="#9aa0a6"/><circle cx="7" cy="7" r="2.2" fill="#292a2d"/></svg>
<svg class="a" style="left:1872px;top:109px;" width="6" height="14" viewBox="0 0 6 14"><circle cx="3" cy="2.5" r="1.4" fill="#9aa0a6"/><circle cx="3" cy="7" r="1.4" fill="#9aa0a6"/><circle cx="3" cy="11.5" r="1.4" fill="#9aa0a6"/></svg>
<svg class="a" style="left:1897px;top:110px;" width="12" height="12" viewBox="0 0 12 12"><path d="M1 1 L11 11 M11 1 L1 11" stroke="#9aa0a6" stroke-width="1.4"/></svg>
<div class="a" style="left:716px;top:184px;width:858px;height:34px;background:#454545;"></div>
<div class="t m" style="left:729.75px;top:137px;font-size:11px;line-height:11px;"><span style="color:#5db0d7">&lt;</span><span style="color:#5db0d7">html</span><span style="color:#9bbbdc"> style</span><span style="color:#9aa0a6">=&quot;</span><span style="color:#f29766">height: 100%;</span><span style="color:#9aa0a6">&quot;</span><span style="color:#5db0d7">&gt;</span></div>
<svg class="a" style="left:734px;top:154px;" width="6" height="8" viewBox="0 0 6 8"><path d="M0.5 0.5 L5.5 4 L0.5 7.5 Z" fill="#9aa0a6"/></svg>
<div class="t m" style="left:742px;top:154px;font-size:11px;line-height:11px;"><span style="color:#5db0d7">&lt;</span><span style="color:#5db0d7">head</span><span style="color:#5db0d7">&gt;</span><span style="color:#9aa0a6">…</span><span style="color:#5db0d7">&lt;/</span><span style="color:#5db0d7">head</span><span style="color:#5db0d7">&gt;</span></div>
<svg class="a" style="left:732px;top:172px;" width="9" height="7" viewBox="0 0 9 7"><path d="M0.5 0.5 H8.5 L4.5 6.5 Z" fill="#9aa0a6"/></svg>
<div class="t m" style="left:742px;top:172px;font-size:11px;line-height:11px;"><span style="color:#5db0d7">&lt;</span><span style="color:#5db0d7">body</span><span style="color:#9bbbdc"> style</span><span style="color:#9aa0a6">=&quot;</span><span style="color:#f29766">margin: 0px; background: #0e0e0e; height: 100%</span><span style="color:#9aa0a6">&quot;</span><span style="color:#5db0d7">&gt;</span></div>
<div class="t m" style="left:753.5px;top:189px;font-size:11px;line-height:11px;"><span style="color:#5db0d7">&lt;</span><span style="color:#5db0d7">img</span><span style="color:#9bbbdc"> style</span><span style="color:#9aa0a6">=&quot;</span><span style="color:#f29766">display: block;-webkit-user-select: none;margin: auto;cursor: zoom-in;background-color: hsl(0, 0%, 90%);transiti</span></div>
<div class="t m" style="left:753.5px;top:205px;font-size:11px;line-height:11px;"><span style="color:#f29766">on: background-color 300ms;</span><span style="color:#9aa0a6">&quot;</span><span style="color:#9bbbdc"> src</span><span style="color:#9aa0a6">=&quot;</span><span style="color:#8ab4f8;text-decoration:underline">file:///C:/Users/PC/Desktop/1093453.webp</span><span style="color:#9aa0a6">&quot;</span><span style="color:#9bbbdc"> width</span><span style="color:#9aa0a6">=&quot;</span><span style="color:#f29766">715</span><span style="color:#9aa0a6">&quot;</span><span style="color:#9bbbdc"> height</span><span style="color:#9aa0a6">=&quot;</span><span style="color:#f29766">446</span><span style="color:#9aa0a6">&quot;</span><span style="color:#5db0d7">&gt;</span></div>
<svg class="a" style="left:718px;top:191px;" width="12" height="4" viewBox="0 0 12 4"><circle cx="1.5" cy="2" r="1.1" fill="#bdbdbd"/><circle cx="5.5" cy="2" r="1.1" fill="#bdbdbd"/><circle cx="9.5" cy="2" r="1.1" fill="#bdbdbd"/></svg>
<div class="a" style="left:1424px;top:202px;width:46px;height:15px;background:transparent;border:1px solid #4a6b80;border-radius:8px"></div>
<svg class="a" style="left:1432px;top:206px;" width="8" height="8" viewBox="0 0 8 8"><path d="M1 7 V2 H6" stroke="#7a8a96" stroke-width="1" fill="none"/><path d="M4 4 L7 7" stroke="#7a8a96" stroke-width="1"/></svg>
<div class="t " style="left:1444px;top:205px;font-family:'Liberation Sans',sans-serif;font-size:11px;line-height:11px;color:#e8eaed;letter-spacing:-0.139px;font-weight:bold;">slot</div>
<div class="t m" style="left:1477px;top:205px;font-size:11px;line-height:11px;"><span style="color:#9aa0a6">== </span><span style="color:#9aa0a6;font-style:italic">$0</span></div>
<div class="t m" style="left:742px;top:223px;font-size:11px;line-height:11px;"><span style="color:#5db0d7">&lt;/</span><span style="color:#5db0d7">body</span><span style="color:#5db0d7">&gt;</span></div>
<div class="t m" style="left:729.75px;top:240px;font-size:11px;line-height:11px;"><span style="color:#5db0d7">&lt;/</span><span style="color:#5db0d7">html</span><span style="color:#5db0d7">&gt;</span></div>
<div class="a" style="left:716px;top:816px;width:858px;height:1px;background:#494c50;"></div>
<div class="a" style="left:716px;top:817px;width:858px;height:24px;background:#202124;"></div>
<div class="a" style="left:795px;top:817px;width:34px;height:24px;background:#2a2b2e;"></div>
<div class="t " style="left:723.5px;top:823px;font-family:'Liberation Sans',sans-serif;font-size:12px;line-height:12px;color:#6fa8dc;letter-spacing:0.333px;">html</div>
<div class="t " style="left:761.5px;top:823px;font-family:'Liberation Sans',sans-serif;font-size:12px;line-height:12px;color:#6fa8dc;letter-spacing:0.245px;">body</div>
<div class="t " style="left:802px;top:823px;font-family:'Liberation Sans',sans-serif;font-size:12px;line-height:12px;color:#6fa8dc;letter-spacing:-0.112px;">img</div>
<div class="a" style="left:1574px;top:130px;width:1px;height:711px;background:#494c50;"></div>
<div class="a" style="left:1575px;top:130px;width:345px;height:26px;background:#292a2d;"></div>
<div class="a" style="left:1575px;top:156px;width:345px;height:1px;background:#494c50;"></div>
<div class="a" style="left:1575px;top:130px;width:44px;height:26px;background:#000;"></div>
<div class="t " style="left:1584.4px;top:138px;font-family:'Liberation Sans',sans-serif;font-size:12px;line-height:12px;color:#fff;letter-spacing:-0.201px;">Styly</div>
<div class="t " style="left:1628.8px;top:138px;font-family:'Liberation Sans',sans-serif;font-size:12px;line-height:12px;color:#9aa0a6;letter-spacing:0.082px;">Vypočteno</div>
<div class="t " style="left:1706px;top:138px;font-family:'Liberation Sans',sans-serif;font-size:12px;line-height:12px;color:#9aa0a6;letter-spacing:-0.446px;">Rozvržení</div>
<div class="t " style="left:1775.5px;top:138px;font-family:'Liberation Sans',sans-serif;font-size:12px;line-height:12px;color:#9aa0a6;letter-spacing:-0.179px;">Posluchače událostí</div>
<svg class="a" style="left:1897px;top:141px;" width="10" height="9" viewBox="0 0 10 9"><path d="M1 1 L4.5 4.5 L1 8 M5 1 L8.5 4.5 L5 8" stroke="#9aa0a6" stroke-width="1.2" fill="none"/></svg>
<div class="a" style="left:1575px;top:157px;width:328px;height:26px;background:#292a2d;"></div>
<div class="a" style="left:1576px;top:158px;width:162px;height:24px;background:#1f1f22;"></div>
<div class="t " style="left:1582px;top:165px;font-family:'Liberation Sans',sans-serif;font-size:12px;line-height:12px;color:#9aa0a6;letter-spacing:0.036px;">Filtrovat</div>
<div class="t " style="left:1749px;top:167px;font-family:'Liberation Mono',monospace;font-size:11px;line-height:11px;color:#bdc1c6;letter-spacing:0.149px;font-weight:bold;">:hov</div>
<div class="t " style="left:1786px;top:167px;font-family:'Liberation Mono',monospace;font-size:11px;line-height:11px;color:#bdc1c6;letter-spacing:-0.101px;font-weight:bold;">.cls</div>
<svg class="a" style="left:1824px;top:163px;" width="18" height="16" viewBox="0 0 18 16"><path d="M8 2 V14 M2 8 H14" stroke="#9aa0a6" stroke-width="1.4"/><path d="M17 11 V16 H12 Z" fill="#9aa0a6"/></svg>
<svg class="a" style="left:1851px;top:162px;" width="16" height="17" viewBox="0 0 16 17"><rect x="2" y="1" width="12" height="8" rx="1" stroke="#9aa0a6" stroke-width="1.3" fill="none"/><rect x="4" y="3" width="8" height="3" fill="#9aa0a6"/><rect x="6" y="9" width="4" height="2" fill="#9aa0a6"/><rect x="6.5" y="11" width="3" height="5" stroke="#9aa0a6" stroke-width="1" fill="none"/></svg>
<svg class="a" style="left:1879px;top:163px;" width="16" height="15" viewBox="0 0 16 15"><rect x="0.7" y="0.7" width="14.6" height="13.6" stroke="#9aa0a6" stroke-width="1.2" fill="none"/><path d="M11 1 V14" stroke="#9aa0a6" stroke-width="1.2"/><path d="M8 4 L4 7.5 L8 11 Z" fill="#9aa0a6"/></svg>
<div class="a" style="left:1575px;top:183px;width:328px;height:1px;background:#494c50;"></div>
<div class="a" style="left:1903px;top:157px;width:17px;height:684px;background:#3d3d3d;"></div>
<svg class="a" style="left:1906px;top:160px;" width="10" height="8" viewBox="0 0 10 8"><path d="M1 6 L5 2 L9 6 Z" fill="#9a9a9a"/></svg>
<svg class="a" style="left:1906px;top:826px;" width="10" height="8" viewBox="0 0 10 8"><path d="M1 2 L5 6 L9 2 Z" fill="#9a9a9a"/></svg>
<div class="a" style="left:1575px;top:184px;width:328px;height:657px;background:#202124;"></div>
<div class="t m" style="left:1579.5px;top:190px;font-size:11px;line-height:11px;"><span style="color:#9aa0a6">element.style </span><span style="color:#e8eaed">{</span></div>
<div class="t m" style="left:1597px;top:204px;font-size:11px;line-height:11px;"><span style="color:#35d4c7">display</span><span style="color:#e8eaed">: </span><span style="color:#e8eaed">block;</span></div>
<div class="t m" style="left:1597px;top:218px;font-size:11px;line-height:11px;"><span style="color:#35d4c7">-webkit-user-select</span><span style="color:#e8eaed">: </span><span style="color:#e8eaed">none;</span></div>
<div class="t m" style="left:1597px;top:232px;font-size:11px;line-height:11px;"><span style="color:#35d4c7">margin</span><span style="color:#e8eaed">:</span><span style="color:#e8eaed">  </span><span style="color:#e8eaed">auto;</span></div>
<svg class="a" style="left:1646.2px;top:232px;" width="6" height="8" viewBox="0 0 6 8"><path d="M0.5 0.5 L5 4 L0.5 7.5 Z" fill="#9aa0a6"/></svg>
<div class="t m" style="left:1597px;top:246px;font-size:11px;line-height:11px;"><span style="color:#35d4c7">cursor</span><span style="color:#e8eaed">: </span><span style="color:#e8eaed">zoom-in;</span></div>
<div class="t m" style="left:1597px;top:260px;font-size:11px;line-height:11px;"><span style="color:#35d4c7">background-color</span><span style="color:#e8eaed">: </span><span style="color:#e8eaed">  </span><span style="color:#e8eaed">hsl(0, 0%, 90%);</span></div>
<div class="a" style="left:1717.8px;top:259px;width:10px;height:10px;background:#e6e6e6;border:1px solid #6a6a6a"></div>
<div class="t m" style="left:1597px;top:274px;font-size:11px;line-height:11px;"><span style="color:#35d4c7">transition</span><span style="color:#e8eaed">:</span><span style="color:#e8eaed">  </span><span style="color:#e8eaed">background-color 300ms;</span></div>
<svg class="a" style="left:1672.6px;top:274px;" width="6" height="8" viewBox="0 0 6 8"><path d="M0.5 0.5 L5 4 L0.5 7.5 Z" fill="#9aa0a6"/></svg>
<div class="t m" style="left:1579.5px;top:288px;font-size:11px;line-height:11px;"><span style="color:#e8eaed">}</span></div>
<div class="a" style="left:1575px;top:304px;width:328px;height:1px;background:#494c50;"></div>
<div class="t m" style="left:1579.5px;top:310px;font-size:11px;line-height:11px;"><span style="color:#9aa0a6;font-style:italic">img[styl atributů] </span><span style="color:#e8eaed">{</span></div>
<div class="t m" style="left:1597px;top:325px;font-size:11px;line-height:11px;"><span style="color:#35d4c7;font-style:italic">width</span><span style="color:#e8eaed">: </span><span style="color:#e8eaed;font-style:italic">715px;</span></div>
<div class="t m" style="left:1597px;top:339px;font-size:11px;line-height:11px;"><span style="color:#35d4c7;font-style:italic">aspect-ratio</span><span style="color:#e8eaed">: </span><span style="color:#e8eaed;font-style:italic">auto 715 / 446;</span></div>
<div class="t m" style="left:1597px;top:353px;font-size:11px;line-height:11px;"><span style="color:#35d4c7;font-style:italic">height</span><span style="color:#e8eaed">: </span><span style="color:#e8eaed;font-style:italic">446px;</span></div>
<div class="t m" style="left:1579.5px;top:367px;font-size:11px;line-height:11px;"><span style="color:#e8eaed;font-style:italic">}</span></div>
<div class="a" style="left:1575px;top:383px;width:328px;height:1px;background:#494c50;"></div>
<div class="a" style="left:1648px;top:417px;width:182px;height:148px;background:#b38b59;border:1px dashed #111"></div>
<div class="a" style="left:1664px;top:438px;width:150px;height:106px;background:#e4c482;border:1px solid #111"></div>
<div class="a" style="left:1679px;top:459px;width:120px;height:64px;background:#b8c47f;border:1px dashed #111"></div>
<div class="a" style="left:1699px;top:480px;width:80px;height:22px;background:#8cb6c1;border:1px solid #111"></div>
<div class="t " style="left:1653px;top:424px;font-family:'Liberation Sans',sans-serif;font-size:11px;line-height:11px;color:#5a3a1a;letter-spacing:-0.271px;">margin</div>
<div class="t " style="left:1722px;top:424px;font-family:'Liberation Sans',sans-serif;font-size:11px;line-height:11px;color:#333;letter-spacing:-0.680px;">245.500</div>
<div class="t " style="left:1722px;top:550px;font-family:'Liberation Sans',sans-serif;font-size:11px;line-height:11px;color:#333;letter-spacing:-0.680px;">245.500</div>
<div class="t " style="left:1668px;top:444px;font-family:'Liberation Sans',sans-serif;font-size:11px;line-height:11px;color:#333;letter-spacing:-0.299px;">border</div>
<div class="t " style="left:1684px;top:465px;font-family:'Liberation Sans',sans-serif;font-size:11px;line-height:11px;color:#333;letter-spacing:-0.450px;">padding</div>
<div class="t " style="left:1720px;top:486px;font-family:'Liberation Sans',sans-serif;font-size:11px;line-height:11px;color:#333;letter-spacing:-0.733px;">715×446</div>
<div class="a" style="left:1736px;top:449px;width:6px;height:1px;background:#222;"></div>
<div class="a" style="left:1736px;top:470px;width:6px;height:1px;background:#222;"></div>
<div class="a" style="left:1736px;top:512px;width:6px;height:1px;background:#222;"></div>
<div class="a" style="left:1736px;top:533px;width:6px;height:1px;background:#222;"></div>
<div class="a" style="left:1655px;top:491px;width:6px;height:1px;background:#222;"></div>
<div class="a" style="left:1670px;top:491px;width:6px;height:1px;background:#222;"></div>
<div class="a" style="left:1690px;top:491px;width:6px;height:1px;background:#222;"></div>
<div class="a" style="left:1781px;top:491px;width:6px;height:1px;background:#222;"></div>
<div class="a" style="left:1801px;top:491px;width:6px;height:1px;background:#222;"></div>
<div class="a" style="left:1817px;top:491px;width:6px;height:1px;background:#222;"></div>
<div class="a" style="left:716px;top:840px;width:1204px;height:1px;background:#494c50;"></div>
<div class="a" style="left:716px;top:841px;width:1204px;height:26px;background:#292a2d;"></div>
<svg class="a" style="left:729px;top:847px;" width="6" height="14" viewBox="0 0 6 14"><circle cx="3" cy="2.5" r="1.4" fill="#9aa0a6"/><circle cx="3" cy="7" r="1.4" fill="#9aa0a6"/><circle cx="3" cy="11.5" r="1.4" fill="#9aa0a6"/></svg>
<div class="t " style="left:753.5px;top:849px;font-family:'Liberation Sans',sans-serif;font-size:12px;line-height:12px;color:#9aa0a6;letter-spacing:-0.195px;">Konzole</div>
<div class="a" style="left:806px;top:841px;width:92px;height:26px;background:#000;"></div>
<div class="t " style="left:815.6px;top:849px;font-family:'Liberation Sans',sans-serif;font-size:12px;line-height:12px;color:#fff;letter-spacing:-0.064px;">What's New</div>
<svg class="a" style="left:884px;top:849px;" width="10" height="10" viewBox="0 0 10 10"><path d="M1.5 1.5 L8.5 8.5 M8.5 1.5 L1.5 8.5" stroke="#e8eaed" stroke-width="1.3"/></svg>
<div class="t " style="left:907px;top:849px;font-family:'Liberation Sans',sans-serif;font-size:12px;line-height:12px;color:#9aa0a6;letter-spacing:-0.085px;">Problémy</div>
<svg class="a" style="left:1897px;top:848px;" width="12" height="12" viewBox="0 0 12 12"><path d="M1 1 L11 11 M11 1 L1 11" stroke="#9aa0a6" stroke-width="1.4"/></svg>
<div class="a" style="left:716px;top:867px;width:1204px;height:1px;background:#494c50;"></div>
<div class="a" style="left:716px;top:868px;width:1187px;height:26px;background:#28292c;"></div>
<div class="t " style="left:731px;top:876px;font-family:'Liberation Sans',sans-serif;font-size:12px;line-height:12px;color:#e8eaed;letter-spacing:0.042px;">Highlights from the Chrome 108 update</div>
<div class="a" style="left:716px;top:894px;width:1187px;height:1px;background:#494c50;"></div>
<div class="a" style="left:716px;top:895px;width:1187px;height:145px;background:#202124;"></div>
<div class="a" style="left:734px;top:909px;width:470px;height:47px;background:transparent;border:1px solid #3c3d40"></div>
<div class="t " style="left:743px;top:916px;font-family:'Liberation Sans',sans-serif;font-size:13px;line-height:13px;color:#8ab4f8;letter-spacing:0.307px;">Hints for inactive CSS properties</div>
<div class="t " style="left:743px;top:935px;font-family:'Liberation Sans',sans-serif;font-size:13px;line-height:13px;color:#9aa0a6;letter-spacing:-0.081px;">Identify CSS styles that are entirely valid but have no visible effect.</div>
<div class="a" style="left:734px;top:960px;width:470px;height:47px;background:transparent;border:1px solid #3c3d40"></div>
<div class="t " style="left:743px;top:967px;font-family:'Liberation Sans',sans-serif;font-size:13px;line-height:13px;color:#8ab4f8;letter-spacing:0.391px;">Auto-detect XPath and text selectors in the Recorder panel</div>
<div class="t " style="left:743px;top:986px;font-family:'Liberation Sans',sans-serif;font-size:13px;line-height:13px;color:#9aa0a6;letter-spacing:-0.077px;">Recorder picks the XPath and shortest unique text of an element as its selector.</div>
<div class="a" style="left:734px;top:1011px;width:470px;height:47px;background:transparent;border:1px solid #3c3d40"></div>
<div class="t " style="left:743px;top:1018px;font-family:'Liberation Sans',sans-serif;font-size:13px;line-height:13px;color:#8ab4f8;letter-spacing:0.405px;">Step through comma-separated expressions</div>
<div class="t " style="left:743px;top:1037px;font-family:'Liberation Sans',sans-serif;font-size:13px;line-height:13px;color:#9aa0a6;letter-spacing:0.082px;">Pause on each expression in comma-separated code when debugging.</div>
<svg class="a" style="left:1252px;top:915px" width="260" height="125" viewBox="0 0 260 125"><rect width="260" height="125" fill="#3b7cf0"/><g stroke="#5f97f4" stroke-width="1" fill="none"><path d="M0 8 H260 M0 59 H260 M0 110 H260 M14 0 V125 M64 0 V125 M114 0 V125 M180 0 V125 M0 -5 L130 125 M128 -5 L0 123"/><circle cx="64" cy="59" r="66"/></g><g stroke="#c0d6fb" stroke-width="2.4" fill="none"><circle cx="64" cy="59" r="43"/><circle cx="64" cy="59" r="31"/><path d="M64 16 H150 M137.5 0 A89.3 89.3 0 0 1 137.5 125 M100 82 L74 125 M0 36 L21 66"/></g><rect x="101.3" y="82.4" width="52" height="32.6" rx="8" fill="#e0262a"/><path d="M121 89.5 L138.3 97.5 L121 105.5 Z" fill="#fff"/><text x="178" y="112" font-family="Liberation Sans" font-size="31" fill="#fff" letter-spacing="0.3">new</text><text x="104" y="165" font-family="Liberation Sans" font-weight="bold" font-size="64" fill="#fff" letter-spacing="8">108</text></svg>
<div class="a" style="left:1903px;top:868px;width:17px;height:172px;background:#3d3d3d;"></div>
<div class="a" style="left:1905px;top:886px;width:13px;height:88px;background:#6a6a6a;"></div>
<svg class="a" style="left:1906px;top:872px;" width="10" height="8" viewBox="0 0 10 8"><path d="M1 6 L5 2 L9 6 Z" fill="#9a9a9a"/></svg>
<svg class="a" style="left:1906px;top:1027px;" width="10" height="8" viewBox="0 0 10 8"><path d="M1 2 L5 6 L9 2 Z" fill="#e0e0e0"/></svg>
<div class="a" style="left:0px;top:1040px;width:1920px;height:40px;background:#1b1c25;"></div>
<svg class="a" style="left:16px;top:1051px;" width="17" height="18" viewBox="0 0 17 18"><path d="M0 2.3 L6.9 1.4 V8.2 H0 Z M8.5 1.2 L16.2 0 V8.2 H8.5 Z M0 9.7 H6.9 V16.6 L0 15.7 Z M8.5 9.7 H16.2 V18 L8.5 16.8 Z" fill="#fff"/></svg>
<div class="a" style="left:48px;top:1040px;width:344px;height:40px;background:#363636;border-top:1px solid #555;border-left:1px solid #4a4a4a"></div>
<svg class="a" style="left:59px;top:1051px;" width="18" height="18" viewBox="0 0 18 18"><circle cx="11" cy="7" r="5.5" stroke="#e0e0e0" stroke-width="1.5" fill="none"/><path d="M7 11 L1.5 16.5" stroke="#e0e0e0" stroke-width="1.7"/></svg>
<div class="t " style="left:88px;top:1053px;font-family:'Liberation Sans',sans-serif;font-size:15px;line-height:15px;color:#d0d0d0;letter-spacing:-0.241px;">Type here to search</div>
<svg class="a" style="left:312px;top:1041px" width="80" height="39" viewBox="0 0 80 39"><defs><linearGradient id="wt" x1="0" y1="1" x2="1" y2="0"><stop offset="0" stop-color="#20b0c0"/><stop offset="1" stop-color="#80f0d0"/></linearGradient></defs><path d="M0 39 Q12 22 36 15 L80 15 V39 Z" fill="url(#wt)"/><rect x="40" y="6" width="8" height="21" fill="#c8e6e6"/><rect x="47" y="3" width="6" height="24" fill="#e2cab4"/><rect x="52" y="9" width="12" height="19" fill="#b8b8ec"/><rect x="62" y="2" width="8" height="24" fill="#8ed0bc"/><rect x="68" y="6" width="11" height="20" fill="#e8b8a0"/><circle cx="57" cy="13.5" r="1.2" fill="#111"/><circle cx="54" cy="21.5" r="1.2" fill="#111"/><rect x="55" y="17" width="6" height="2" fill="#f0e0a0"/><path d="M26 30 Q34 23 50 25 L80 23 V31 Q60 34 40 32 Q30 31 26 30 Z" fill="#4c9c44"/><path d="M20 39 Q26 31 40 32 Q60 34 80 29 V33 Q60 37 42 36 Q30 36 28 39 Z" fill="#e2b888"/><path d="M28 39 Q34 35 48 36 Q66 36 78 32 V39 Z" fill="#38c0c8"/><path d="M29 30 Q28 22 30.5 12" stroke="#7a5018" stroke-width="1.6" fill="none"/><ellipse cx="26" cy="10" rx="4.5" ry="3" fill="#a8d040"/><ellipse cx="34" cy="9" rx="5" ry="3" fill="#b8e050"/><ellipse cx="30" cy="13" rx="3" ry="2.5" fill="#90c038"/></svg>
<svg class="a" style="left:408px;top:1052px;" width="16" height="16" viewBox="0 0 16 16"><circle cx="8" cy="8" r="6.3" stroke="#fff" stroke-width="1.9" fill="none"/></svg>
<svg class="a" style="left:455px;top:1051px;" width="17" height="18" viewBox="0 0 17 18"><path d="M1 1 H8 M1 17 H8 M3 4 H12 V14 H3 Z M14 1 V3 M14 6 V12 M14 15 V17" stroke="#fff" stroke-width="1.4" fill="none"/><rect x="13" y="4" width="2.5" height="2.5" fill="#fff"/></svg>
<svg class="a" style="left:503px;top:1048px;" width="24" height="24" viewBox="0 0 24 24"><path d="M1 5 H9 L11 7 H23 V21 H1 Z" fill="#f0c040"/><path d="M1 8 H23 V21 H1 Z" fill="#f8d860"/><path d="M7 14 H17 V21 H14 V17 H10 V21 H7 Z" fill="#4aa0e8"/></svg>
<svg class="a" style="left:552px;top:1048px;" width="24" height="24" viewBox="0 0 24 24"><defs><linearGradient id="eg" x1="0" y1="0" x2="1" y2="1"><stop offset="0" stop-color="#3ad0a0"/><stop offset="1" stop-color="#1060c0"/></linearGradient></defs><circle cx="12" cy="12" r="11" fill="url(#eg)"/><path d="M6 14 Q6 8 12 8 Q17 8 17 12 H9 Q10 17 17 17 Q14 20 11 20 Q6 19 6 14 Z" fill="#1b1c25" opacity="0.55"/></svg>
<svg class="a" style="left:601px;top:1048px;" width="24" height="24" viewBox="0 0 24 24"><circle cx="12" cy="12" r="11" fill="#db4437"/><path d="M12 12 L22.5 9 A11 11 0 0 1 12 23 Z" fill="#f4c20d"/><path d="M12 12 L12 23 A11 11 0 0 1 1.5 8 Z" fill="#0f9d58"/><circle cx="12" cy="12" r="5" fill="#fff"/><circle cx="12" cy="12" r="4" fill="#4285f4"/></svg>
<svg class="a" style="left:650px;top:1048px;" width="24" height="24" viewBox="0 0 24 24"><circle cx="12" cy="12" r="11.5" fill="#1ed760"/><path d="M5.5 8.5 Q12 6 18.5 9.5 M6.5 12.3 Q12 10.5 17.5 13.3 M7.5 15.8 Q12 14.5 16.5 16.8" stroke="#111" stroke-width="2" fill="none" stroke-linecap="round"/></svg>
<svg class="a" style="left:699px;top:1048px;" width="24" height="24" viewBox="0 0 24 24"><path d="M12 2 L21 8 V21 H3 V8 Z" fill="#6a6a6a"/><circle cx="12" cy="13" r="6" fill="#4a4a4a"/><circle cx="14" cy="12" r="5" fill="#6a6a6a"/></svg>
<svg class="a" style="left:748px;top:1048px;" width="24" height="24" viewBox="0 0 24 24"><rect x="1" y="1" width="22" height="22" rx="3" fill="#49021f"/><text x="4.5" y="17" font-family="Liberation Sans" font-weight="bold" font-size="12" fill="#ff3366">Id</text></svg>
<svg class="a" style="left:797px;top:1048px;" width="24" height="24" viewBox="0 0 24 24"><path d="M2 4 L10 1 L22 3 L23 14 L19 23 L3 21 Z" fill="#2fb5e8"/><path d="M15 1 L23 6 L21 12 Z" fill="#f0e030"/><rect x="5" y="5" width="15" height="15" fill="#000"/><text x="6" y="13" font-family="Liberation Sans" font-weight="bold" font-size="7.5" fill="#fff">WS</text><rect x="7" y="16" width="5" height="1.2" fill="#fff"/></svg>
<svg class="a" style="left:846px;top:1048px;" width="24" height="24" viewBox="0 0 24 24"><path d="M17 1 L23 4 V20 L17 23 L6 13 L2 16 L0.5 15 V9 L2 8 L6 11 Z M17 6 L10 12 L17 18 Z" fill="#2a9ef0"/><path d="M17 1 L23 4 V20 L17 23 Z" fill="#1f7ed0"/></svg>
<svg class="a" style="left:895px;top:1048px;" width="24" height="24" viewBox="0 0 24 24"><circle cx="11.5" cy="11.5" r="11" fill="#5865f2"/><path d="M6 9 Q11.5 6 17 9 Q18 13 16.5 15 Q11.5 17 6.5 15 Q5 13 6 9 Z" fill="#fff"/><circle cx="9.5" cy="12" r="1.2" fill="#5865f2"/><circle cx="13.5" cy="12" r="1.2" fill="#5865f2"/><circle cx="18" cy="18.5" r="5.5" fill="#ed4245"/><text x="16" y="22" font-family="Liberation Sans" font-size="8" fill="#fff">1</text></svg>
<svg class="a" style="left:944px;top:1048px;" width="24" height="24" viewBox="0 0 24 24"><rect x="1" y="1" width="22" height="22" rx="3" fill="#001e36"/><text x="3" y="17" font-family="Liberation Sans" font-weight="bold" font-size="12" fill="#31a8ff">Ps</text></svg>
<svg class="a" style="left:993px;top:1048px;" width="24" height="24" viewBox="0 0 24 24"><rect x="1" y="1" width="22" height="22" rx="3" fill="#00005b"/><text x="2" y="17" font-family="Liberation Sans" font-weight="bold" font-size="12" fill="#9999ff">An</text></svg>
<svg class="a" style="left:1042px;top:1048px;" width="24" height="24" viewBox="0 0 24 24"><rect x="1" y="1" width="22" height="22" rx="3" fill="#470137"/><text x="2.5" y="17" font-family="Liberation Sans" font-weight="bold" font-size="12" fill="#ff61f6">Xd</text></svg>
<svg class="a" style="left:1090px;top:1048px;" width="24" height="24" viewBox="0 0 24 24"><circle cx="12" cy="12" r="11" fill="#1b5f8a"/><circle cx="12" cy="12" r="11" fill="#1a2a4a" opacity="0.4"/><circle cx="15.5" cy="8" r="3.6" stroke="#fff" stroke-width="1.6" fill="none"/><path d="M2 13 L10 16 L14 10" stroke="#fff" stroke-width="2.5" fill="none"/><circle cx="9" cy="16" r="2.2" fill="#fff"/></svg>
<svg class="a" style="left:1140px;top:1048px;" width="24" height="24" viewBox="0 0 24 24"><rect x="6" y="1" width="17" height="22" rx="1.5" fill="#2b7cd3"/><rect x="6" y="12" width="17" height="11" fill="#185abd"/><rect x="1" y="6" width="12" height="12" rx="1" fill="#2150b8"/><text x="2.5" y="16" font-family="Liberation Sans" font-weight="bold" font-size="10" fill="#fff">W</text></svg>
<svg class="a" style="left:1189px;top:1048px;" width="24" height="24" viewBox="0 0 24 24"><defs><linearGradient id="ccg" x1="0" y1="0" x2="1" y2="1"><stop offset="0" stop-color="#ff2bc2"/><stop offset="0.45" stop-color="#ff3a1a"/><stop offset="0.7" stop-color="#ffd700"/><stop offset="1" stop-color="#20c0a0"/></linearGradient></defs><rect x="1" y="1" width="22" height="22" rx="4" fill="url(#ccg)"/><path d="M5 14 Q5 9 9 9 Q12 9 12 12 Q12 9 15 9 Q19 9 19 13 Q19 17 15 17 H9 Q5 17 5 14 Z" stroke="#fff" stroke-width="1.4" fill="none"/></svg>
<svg class="a" style="left:1238px;top:1048px;" width="24" height="24" viewBox="0 0 24 24"><path d="M2 15 L12 7 L9 4 L17 6" stroke="#f08a1a" stroke-width="3" fill="none" stroke-linecap="round"/><circle cx="15" cy="13" r="7.5" fill="#f08a1a"/><circle cx="15" cy="13" r="4.8" fill="#fff"/><circle cx="15" cy="13" r="2.8" fill="#2a6aa8"/></svg>
<svg class="a" style="left:1287px;top:1048px;" width="24" height="24" viewBox="0 0 24 24"><circle cx="11" cy="11" r="10.5" fill="#db4437"/><path d="M11 11 L21.5 8 A10.5 10.5 0 0 1 11 21.5 Z" fill="#f4c20d"/><path d="M11 11 L11 21.5 A10.5 10.5 0 0 1 1 7.5 Z" fill="#0f9d58"/><circle cx="11" cy="11" r="4.6" fill="#fff"/><circle cx="11" cy="11" r="3.6" fill="#4285f4"/><circle cx="16" cy="16" r="6" fill="#a8c8f0"/><path d="M13 15 Q16 12 19 16 L18 22 L13 21 Z" fill="#e070c8"/></svg>
<svg class="a" style="left:1336px;top:1048px;" width="24" height="24" viewBox="0 0 24 24"><rect x="1" y="1" width="22" height="7" fill="#c0203a"/><rect x="1" y="8" width="22" height="8" fill="#3a3ab8"/><rect x="1" y="16" width="22" height="7" fill="#2a9a3a"/><rect x="9" y="1" width="7" height="22" fill="#e88a2a"/><rect x="10" y="12" width="5" height="5" fill="#fff"/><rect x="11" y="13" width="3" height="3" fill="#6a3a10"/></svg>
<svg class="a" style="left:1385px;top:1048px;" width="24" height="24" viewBox="0 0 24 24"><rect x="2" y="2" width="20" height="20" rx="2" fill="#222"/><rect x="4" y="4" width="16" height="5" fill="#d8d8d8"/><path d="M5 12 H19 M5 15 H19 M5 18 H19" stroke="#777" stroke-width="1" stroke-dasharray="1.5 2"/></svg>
<svg class="a" style="left:1433px;top:1048px;" width="24" height="24" viewBox="0 0 24 24"><path d="M3 1 H15 L21 7 V23 H3 Z" fill="#dce8f8"/><path d="M15 1 V7 H21" fill="#a8c0e0"/></svg>
<div class="a" style="left:1275px;top:1040px;width:48px;height:40px;background:rgba(255,255,255,0.13);"></div>
<svg class="a" style="left:1287px;top:1048px;" width="24" height="24" viewBox="0 0 24 24"><circle cx="11" cy="11" r="10.5" fill="#db4437"/><path d="M11 11 L21.5 8 A10.5 10.5 0 0 1 11 21.5 Z" fill="#f4c20d"/><path d="M11 11 L11 21.5 A10.5 10.5 0 0 1 1 7.5 Z" fill="#0f9d58"/><circle cx="11" cy="11" r="4.6" fill="#fff"/><circle cx="11" cy="11" r="3.6" fill="#4285f4"/><circle cx="16" cy="16" r="6" fill="#a8c8f0"/><path d="M13 15 Q16 12 19 16 L18 22 L13 21 Z" fill="#e070c8"/></svg>
<div class="a" style="left:642px;top:1078px;width:40px;height:2px;background:#8aaed8;"></div>
<div class="a" style="left:887px;top:1078px;width:40px;height:2px;background:#8aaed8;"></div>
<div class="a" style="left:1132px;top:1078px;width:40px;height:2px;background:#8aaed8;"></div>
<div class="a" style="left:1275px;top:1078px;width:48px;height:2px;background:#8aaed8;"></div>
<div class="a" style="left:1328px;top:1078px;width:40px;height:2px;background:#8aaed8;"></div>
<div class="a" style="left:1377px;top:1078px;width:40px;height:2px;background:#8aaed8;"></div>
<div class="a" style="left:1426px;top:1078px;width:40px;height:2px;background:#8aaed8;"></div>
<svg class="a" style="left:1666px;top:1055px;" width="13" height="8" viewBox="0 0 13 8"><path d="M1 7 L6.5 1.5 L12 7" stroke="#fff" stroke-width="1.3" fill="none"/></svg>
<svg class="a" style="left:1690px;top:1052px;" width="16" height="16" viewBox="0 0 16 16"><path d="M2 14 A12 12 0 0 1 14 2 M5 14 A9 9 0 0 1 14 5 M8 14 A6 6 0 0 1 14 8" stroke="#fff" stroke-width="1.2" fill="none"/><circle cx="13" cy="13" r="1.8" fill="#fff"/></svg>
<svg class="a" style="left:1712px;top:1051px;" width="18" height="18" viewBox="0 0 18 18"><path d="M2 6.5 H5 L9 3 V15 L5 11.5 H2 Z" stroke="#fff" stroke-width="1.1" fill="none"/><path d="M11 6.5 Q12.5 9 11 11.5 M13 4.5 Q16 9 13 13.5 M15 2.5 Q19 9 15 15.5" stroke="#fff" stroke-width="1.1" fill="none"/></svg>
<svg class="a" style="left:1740px;top:1051px;" width="18" height="18" viewBox="0 0 18 18"><path d="M14 2 L16 4 L7 13 L5 11 Z" stroke="#fff" stroke-width="1.1" fill="none"/><path d="M4 9 Q1 11 2 15 Q4 17 6 14" stroke="#fff" stroke-width="1.1" fill="none"/><path d="M13 9 Q16 9 15 12" stroke="#fff" stroke-width="1.1" fill="none"/></svg>
<div class="t " style="left:1773px;top:1054px;font-family:'Liberation Sans',sans-serif;font-size:11.5px;line-height:11.5px;color:#fff;letter-spacing:-1.215px;">CES</div>
<div class="t " style="left:1821px;top:1045px;font-family:'Liberation Sans',sans-serif;font-size:12px;line-height:12px;color:#fff;letter-spacing:-0.806px;">12:51</div>
<div class="t " style="left:1807px;top:1063px;font-family:'Liberation Sans',sans-serif;font-size:12px;line-height:12px;color:#fff;letter-spacing:-0.606px;">03.12.2022</div>
<svg class="a" style="left:1878px;top:1051px;" width="20" height="20" viewBox="0 0 20 20"><path d="M1.5 1.5 H17.5 V14 H11 L8 17 L5 14 H1.5 Z" fill="#fff"/><path d="M4.5 5 H14.5 M4.5 8 H14.5 M4.5 11 H10" stroke="#1b1c25" stroke-width="1.1"/><circle cx="15.5" cy="15" r="3.2" fill="#1b1c25"/><path d="M13.5 16.5 A2.3 2.3 0 1 0 17 13" stroke="#fff" stroke-width="1.1" fill="none"/></svg>
<div class="a" style="left:1915px;top:1040px;width:1px;height:40px;background:#555;"></div>
</body></html>
